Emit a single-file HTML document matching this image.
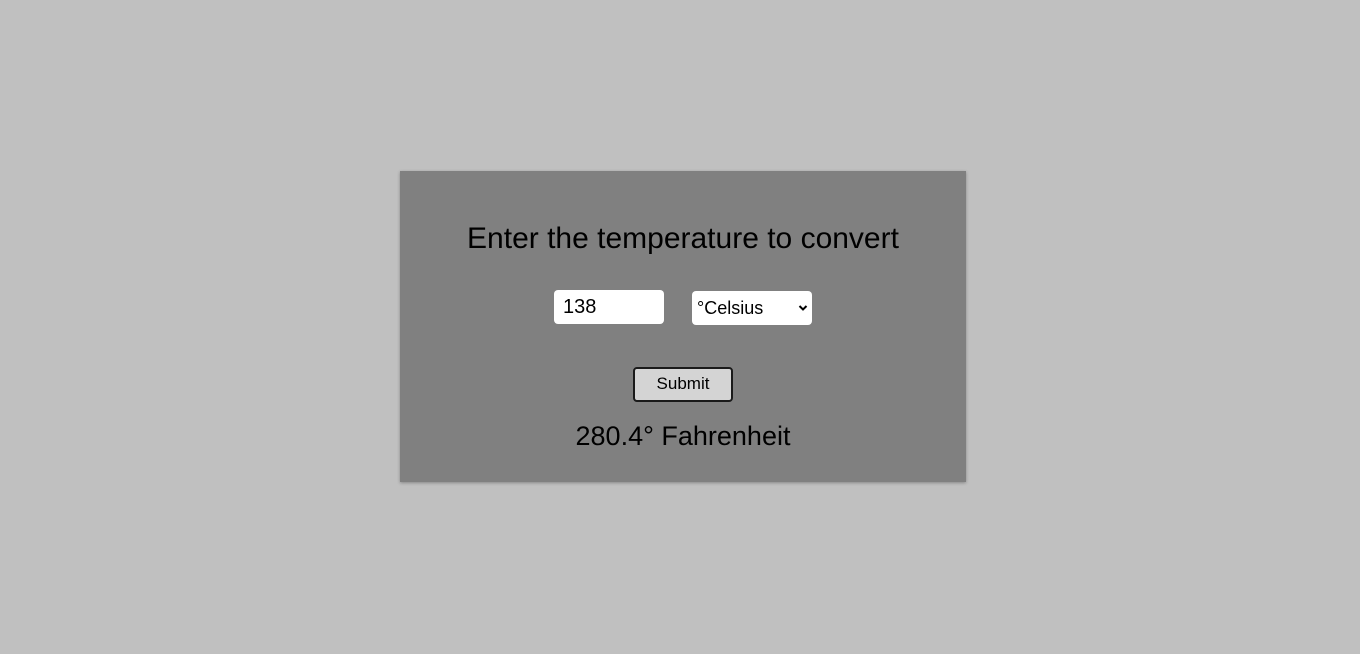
<!DOCTYPE html>
<html><head><style>
html,body{margin:0;padding:0;background:#c0c0c0;width:1360px;height:654px;overflow:hidden;font-family:"Liberation Sans",Arial,sans-serif}
.card{position:absolute;left:400px;top:171px;width:566px;height:311px;background:#808080;box-shadow:0 1px 3px rgba(0,0,0,.3)}
h1{position:absolute;left:0;width:566px;top:51px;margin:0;text-align:center;font-weight:normal;font-size:30px;color:#000}
.inp{position:absolute;left:154px;top:119px;width:110px;height:34px;background:#fff;border-radius:4px;box-sizing:border-box;padding-left:9px;font-size:20px;line-height:34px}
.sel{position:absolute;left:292px;top:120px;width:120px;height:34px;background:#fff;border-radius:4px;box-sizing:border-box;padding-left:5px;font-size:18px;line-height:34px}
.sel svg{position:absolute;right:4px;top:13px}
.btn{position:absolute;left:233px;top:196px;width:100px;height:35px;background:#d4d4d4;border:2px solid #1a1a1a;border-radius:4px;box-sizing:border-box;text-align:center;font-size:17px;line-height:30px}
.res{position:absolute;left:0;width:566px;top:250px;text-align:center;font-size:27px}
</style></head><body>
<div class="card">
<h1>Enter the temperature to convert</h1>
<div class="inp">138</div>
<div class="sel">°Celsius<svg width="10" height="8" viewBox="0 0 10 8"><path d="M1.5 2 L5 5.5 L8.5 2" stroke="#000" stroke-width="2" fill="none"/></svg></div>
<div class="btn">Submit</div>
<div class="res">280.4° Fahrenheit</div>
</div>
</body></html>
